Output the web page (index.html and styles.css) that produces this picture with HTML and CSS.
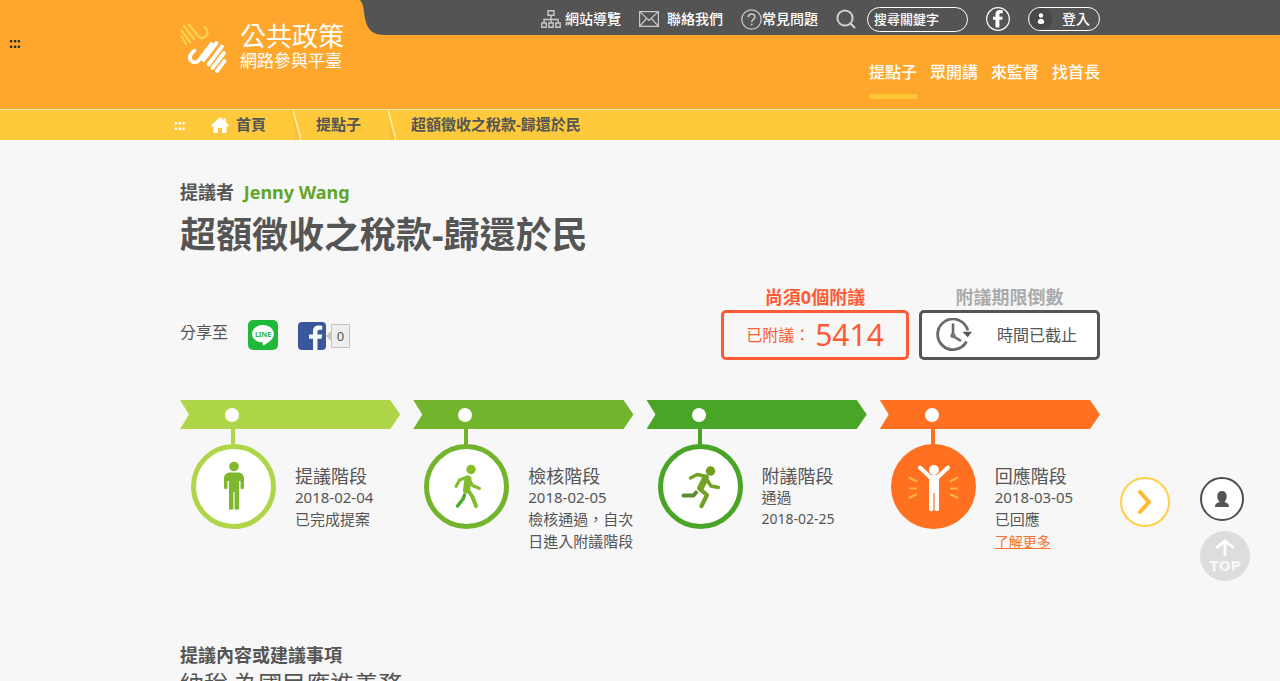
FILE: index.html
```html
<!DOCTYPE html>
<html lang="zh-Hant">
<head>
<meta charset="utf-8">
<meta name="viewport" content="width=device-width, initial-scale=1">
<title>超額徵收之稅款-歸還於民</title>
<link rel="stylesheet" href="styles.css">
</head>
<body>
<header class="header">
  <a class="access-key" href="#top" title="上方導覽區">:::</a>
  <a class="logo" href="#">
    <svg class="logo-mark" viewBox="0 0 48 52" width="48" height="52" fill="none" stroke-linecap="round" aria-hidden="true">
      <g stroke="#fdd04c" stroke-width="2.400">
        <path d="M1.500 14.500l4.500 7.500M1.500 8.500L10 20M4 4l10 13M9 2.500l9 11.500c2 2.500 5 2.500 7.500.500s2.500-4.500 1-7l-2-2.500"/>
      </g>
      <g stroke="#fff" stroke-width="3.800">
        <path d="M31.500 22L20 37c-2.500 3.500-6 4.500-8.500 2s-1.800-5.500.5-8l2.500-2.500M36.500 21L23.500 38M42 24.500L28.500 42.500M44 31L32.500 46M44.500 39L37 49"/>
      </g>
    </svg>
    <span class="logo-text"><span class="logo-main">公共政策</span><span class="logo-sub">網路參與平臺</span></span>
  </a>
  <div class="topbar">
    <svg class="topbar-corner" viewBox="0 0 28 35" width="28" height="35" aria-hidden="true"><path d="M0 0C5 5 3 16 7 25c3 7 9 10 17 10h4V0z" fill="#545454"/></svg>
    <div class="topbar-items">
      <a class="top-link" href="#"><svg viewBox="0 0 20 20" width="20" height="20" fill="none" stroke="#c8c8c8" stroke-width="1.400" aria-hidden="true"><path d="M7 1.700h6v4.600H7zM.8 14h4.400v4.200H.8zM7.800 14h4.400v4.200H7.800zM14.800 14h4.400v4.200h-4.400zM10 6.500V14M3 14v-3.500h14V14"/></svg>網站導覽</a>
      <a class="top-link mail" href="#"><svg viewBox="0 0 20 16" width="20" height="16" fill="none" stroke="#c8c8c8" stroke-width="1.200" aria-hidden="true"><path d="M.6.600h18.800v14.800H.6zM.6.600L10 9.500 19.400.600M.6 15.400L7.500 7.500M19.400 15.400L12.500 7.500"/></svg>聯絡我們</a>
      <a class="top-link faq" href="#"><svg viewBox="0 0 21 21" width="21" height="21" fill="none" stroke="#c8c8c8" stroke-width="1.300" aria-hidden="true"><circle cx="10.500" cy="10.500" r="9.700"/><path d="M7.300 8.300c0-4.300 6.600-4.300 6.600-.4 0 2.500-3.200 2.400-3.200 5.200" stroke-width="1.600"/><path d="M10.700 14.600v1.700" stroke-width="1.800"/></svg>常見問題</a>
      <form class="search">
        <button class="search-button" type="button" aria-label="搜尋"><svg viewBox="0 0 20 20" width="20" height="20" fill="none" stroke="#d0d0d0" stroke-width="2" stroke-linecap="round" aria-hidden="true"><circle cx="9" cy="9" r="7.600"/><path d="M14.500 14.500l4 4"/></svg></button>
        <input class="search-input" type="text" placeholder="搜尋關鍵字" aria-label="搜尋關鍵字">
      </form>
      <a class="facebook" href="#" aria-label="Facebook"><svg viewBox="0 0 24 24" width="24" height="24" aria-hidden="true"><circle cx="12" cy="12" r="11.300" fill="none" stroke="#fff" stroke-width="1.200"/><path d="M9.500 20.500v-7.700H7V9.700h2.500V7.600c0-3.400 2-4.700 4.600-4.700l2.600.1v3.300h-1.600c-1.400 0-1.700.6-1.700 1.500v1.900h3.200l-.4 3.100h-2.800v7.700z" fill="#fff"/></svg></a>
      <a class="login" href="#"><svg viewBox="0 0 22 22" width="22" height="22" aria-hidden="true"><circle cx="11" cy="11" r="11" fill="#484848"/><circle cx="11" cy="7.500" r="2.200" fill="#fff"/><path d="M7.800 14c0-4.300 6.400-4.300 6.400 0 0 2.700-6.400 2.700-6.400 0z" fill="#fff"/></svg>登入</a>
    </div>
  </div>
  <nav class="main-nav">
    <a class="nav-link current" href="#">提點子</a>
    <a class="nav-link" href="#">眾開講</a>
    <a class="nav-link" href="#">來監督</a>
    <a class="nav-link" href="#">找首長</a>
  </nav>
</header>

<nav class="breadcrumb" aria-label="路徑">
  <div class="breadcrumb-inner">
    <a class="breadcrumb-key" href="#main" title="主要內容區">:::</a>
    <a class="crumb" href="#"><svg viewBox="0 0 18 16" width="18" height="16" fill="#fff" aria-hidden="true"><path d="M9 0l3.500 3.200V1.500H15v4l3 3L17 9.700l-1.500-.8V16H11v-5H7v5H2.500V8.900L1 9.700 0 8.500z"/></svg><span class="crumb-text">首頁</span></a>
    <svg class="divider" viewBox="0 0 8 30" width="8" height="30" aria-hidden="true"><path d="M0 0l8 30H2z" fill="#fabf39"/><path d="M0 0l8 30" stroke="#ffec9c" stroke-width="1.800"/></svg>
    <a class="crumb" href="#"><span class="crumb-text">提點子</span></a>
    <svg class="divider" viewBox="0 0 8 30" width="8" height="30" aria-hidden="true"><path d="M0 0l8 30H2z" fill="#fabf39"/><path d="M0 0l8 30" stroke="#ffec9c" stroke-width="1.800"/></svg>
    <span class="crumb-text">超額徵收之稅款-歸還於民</span>
  </div>
</nav>

<main class="page" id="main">
  <p class="proposer">提議者 <a class="proposer-name" href="#">Jenny Wang</a></p>
  <h1 class="title">超額徵收之稅款-歸還於民</h1>

  <div class="summary">
    <div class="share">
      <span class="share-label">分享至</span>
      <a class="share-line" href="#" aria-label="LINE">
        <svg viewBox="0 0 30 30" width="30" height="30"><rect width="30" height="30" rx="5" fill="#1fb83a"/><path d="M15 5c6 0 10.900 3.900 10.900 8.900 0 4.300-4.500 8.300-10.400 11.300-.8.400-1-.1-.8-1l.2-1.600C8.500 22.400 4.100 18.600 4.100 13.900 4.100 8.900 9 5 15 5z" fill="#fff"/><text x="15" y="16.500" class="line-word">LINE</text></svg>
      </a>
      <a class="share-facebook" href="#" aria-label="Facebook">
        <svg viewBox="0 0 28 28" width="28" height="28" aria-hidden="true"><rect width="28" height="28" rx="4" fill="#39579a"/><path d="M15 28V16.800h-4V12.500h4V9.300c0-4 2.400-5.700 5.800-5.700l3.500.2v4h-2.400c-1.900 0-2.400.9-2.400 2.300v2.400h4.600l-.6 4.300h-4V28z" fill="#f7f7f7"/></svg>
        <svg viewBox="0 0 5 10" width="5" height="10" aria-hidden="true"><path d="M0 5l5-5v10z" fill="#c4c4c4"/></svg>
        <span class="count">0</span>
      </a>
    </div>
    <section class="stat endorse">
      <h2 class="stat-title">尚須0個附議</h2>
      <p class="stat-box">已附議： <strong class="stat-number">5414</strong></p>
    </section>
    <section class="stat deadline">
      <h2 class="stat-title">附議期限倒數</h2>
      <p class="stat-box"><svg viewBox="0 0 36 34" width="36" height="34" fill="none" stroke="#6a6a6a" aria-hidden="true"><path d="M31.800 12.500A15.300 15.300 0 1 0 30.500 23.500" stroke-width="2.800"/><path d="M26.500 13.800h9.500l-4.300 5.400z" fill="#555" stroke="none"/><path d="M17 5.500V18l8 5" stroke-width="2.600"/><circle cx="17" cy="17.500" r="2.600" fill="#777" stroke="none"/></svg>時間已截止</p>
    </section>
  </div>

  <div class="timeline">
    <ol class="steps">
      <li class="step step-propose">
        <div class="ribbon"><span class="dot"></span></div>
        <div class="step-body">
          <svg class="badge" viewBox="0 0 85 100" width="85" height="100" aria-hidden="true">
            <path d="M42 0v18" stroke="currentColor" stroke-width="4"/><circle cx="42.500" cy="57.500" r="40" fill="#fff" stroke="currentColor" stroke-width="5"/>
            <g fill="#7fb82c"><circle cx="43" cy="37.500" r="4.800"/><path d="M39 43.500h8c3.500 0 6 2.500 6 6V59c0 1.500-3.300 1.500-3.500 0v-7H48v28.500h-4.400V63h-1.200v17.500H38V52h-1.500v7c-.2 1.500-3.500 1.500-3.500 0v-9.500c0-3.500 2.500-6 6-6z"/></g>
          </svg>
          <div class="step-text"><h3 class="step-title">提議階段</h3><p>2018-02-04</p><p>已完成提案</p></div>
        </div>
      </li>
      <li class="step step-review">
        <div class="ribbon"><span class="dot"></span></div>
        <div class="step-body">
          <svg class="badge" viewBox="0 0 85 100" width="85" height="100" aria-hidden="true">
            <path d="M42 0v18" stroke="currentColor" stroke-width="4"/><circle cx="42.500" cy="57.500" r="40" fill="#fff" stroke="currentColor" stroke-width="5"/>
            <circle cx="47" cy="40.500" r="4.700" fill="#85bd26"/>
            <g fill="none" stroke="#82bb2b" stroke-linecap="round" stroke-linejoin="round"><path d="M32 57.500l3.500-6.500 8-3M45 50l3.500 6.500 7 3" stroke-width="3"/><path d="M44 50l-1.500 11" stroke-width="7"/><path d="M44 61l4.500 7 3.500 9" stroke-width="4"/><path d="M40.500 66l-1.500 4-5.500 7" stroke="#4daa30" stroke-width="3.500"/></g>
          </svg>
          <div class="step-text"><h3 class="step-title">檢核階段</h3><p>2018-02-05</p><p>檢核通過，自次日進入附議階段</p></div>
        </div>
      </li>
      <li class="step step-endorse">
        <div class="ribbon"><span class="dot"></span></div>
        <div class="step-body">
          <svg class="badge" viewBox="0 0 85 100" width="85" height="100" aria-hidden="true">
            <path d="M42 0v18" stroke="currentColor" stroke-width="4"/><circle cx="42.500" cy="57.500" r="40" fill="#fff" stroke="currentColor" stroke-width="5"/>
            <circle cx="52.500" cy="42" r="4.700" fill="#6f9d20"/>
            <g fill="none" stroke="#71a226" stroke-linecap="round" stroke-linejoin="round"><path d="M32.500 49l6.500-3.500 10 2M49 51l4 6 7.500 1.500" stroke-width="3.400"/><path d="M47.500 49l-5 10" stroke-width="6.500"/><path d="M42 60l7 6-5.500 11" stroke-width="4.200"/><path d="M38 63.500l-2.500 3H25.500" stroke="#5c8e2b" stroke-width="4"/></g>
          </svg>
          <div class="step-text"><h3 class="step-title">附議階段</h3><p>通過</p><p class="small">2018-02-25</p></div>
        </div>
      </li>
      <li class="step step-respond">
        <div class="ribbon"><span class="dot"></span></div>
        <div class="step-body">
          <svg class="badge" viewBox="0 0 85 100" width="85" height="100" aria-hidden="true">
            <path d="M42 0v18" stroke="currentColor" stroke-width="4"/><circle cx="42.500" cy="57.500" r="42.500" fill="currentColor"/>
            <circle cx="43" cy="41" r="5" fill="#fff"/>
            <path d="M29 38.500L40 49M57 38.500L46 49" stroke="#fff" stroke-width="4" stroke-linecap="round"/><path d="M38 46h10v35c0 1.500-4.200 1.500-4.400 0V64h-1.200v17c-.2 1.500-4.400 1.500-4.400 0z" fill="#fff"/>
            <path d="M18 48.500l8 4M18 59.500h8M18 69l8-4M67 48.500l-8 4M67 59.500h-8M67 69l-8-4" stroke="#ffb43d" stroke-width="2"/>
          </svg>
          <div class="step-text"><h3 class="step-title">回應階段</h3><p>2018-03-05</p><p>已回應</p><p><a class="more" href="#">了解更多</a></p></div>
        </div>
      </li>
    </ol>
    <button class="next" type="button" aria-label="下一個"><svg viewBox="0 0 50 50" width="50" height="50" aria-hidden="true"><circle cx="25" cy="25" r="24" fill="#fff" stroke="#ffd04a" stroke-width="2"/><path d="M20 15l9 10-9 10" fill="none" stroke="#ffb932" stroke-width="4" stroke-linecap="round" stroke-linejoin="round"/></svg></button>
  </div>

  <section class="content">
    <h2 class="content-title">提議內容或建議事項</h2>
    <p class="content-text">納稅 為國民應進義務</p>
  </section>
</main>

<div class="floating">
  <button class="float-button" type="button" aria-label="會員"><svg viewBox="0 0 44 44" width="44" height="44" aria-hidden="true"><circle cx="22" cy="22" r="21" fill="#fff" stroke="#4d4d4d" stroke-width="2"/><path d="M22 14c3 0 4.700 2 4.700 5s-1 4.600-2.200 5.700c1.300 1.200 4.500 1.100 4.500 5.300H15c0-4.200 3.200-4.100 4.500-5.300-1.200-1.100-2.200-2.700-2.200-5.700s1.700-5 4.700-5z" fill="#555"/></svg></button>
  <a class="to-top" href="#"><svg viewBox="0 0 20 18" width="20" height="18" fill="none" stroke="#fff" stroke-width="2.800" aria-hidden="true"><path d="M10 17V2M1 9l9-7 9 7"/></svg>TOP</a>
</div>
</body>
</html>
```
FILE: styles.css
```css
* {
  box-sizing: border-box;
}

body {
  margin: 0;
  background: #f7f7f7;
  color: #555;
  font-family: "Noto Sans", "Noto Sans CJK TC", sans-serif;
  font-size: 15px;
  line-height: 22px;
}

h1, h2, h3, p, ol {
  margin: 0;
  padding: 0;
}

a {
  color: inherit;
  text-decoration: none;
}

svg {
  display: block;
  flex: none;
}

button {
  padding: 0;
  border: 0;
  background: none;
  cursor: pointer;
}

/* Header */
.header {
  display: grid;
  grid-template-columns: 1fr 180px minmax(0, 740px) 1fr;
  grid-template-rows: 35px 74px;
  background: #ffa72d;
  color: #fff;
}

.header::after {
  content: "";
  grid-area: 1 / 4;
  background: #545454;
}

.access-key {
  grid-area: 1 / 1 / 3 / 2;
  padding: 32px 0 0 9px;
  color: #222;
  font-size: 14px;
  font-weight: 700;
  justify-self: start;
}

.logo {
  grid-area: 1 / 2 / 3 / 3;
  display: flex;
  align-items: flex-start;
  gap: 12px;
  padding-top: 22px;
}

.logo-text {
  display: flex;
  flex-direction: column;
  white-space: nowrap;
}

.logo-main {
  font-size: 26px;
  line-height: 28px;
}

.logo-sub {
  font-size: 17px;
  line-height: 22px;
}

.topbar {
  grid-area: 1 / 3;
  display: flex;
}

.topbar-items {
  display: flex;
  flex: 1;
  align-items: center;
  justify-content: flex-end;
  gap: 18px;
  padding-top: 3px;
  background: #545454;
  font-size: 14px;
  font-weight: 500;
}

.top-link {
  display: flex;
  align-items: center;
  gap: 4px;
  white-space: nowrap;
}

.mail {
  gap: 8px;
}

.faq {
  gap: 0;
}

.search {
  display: flex;
  align-items: center;
  gap: 11px;
}

.search-input {
  width: 101px;
  height: 25px;
  padding: 0 6px;
  border: 1px solid #fff;
  border-radius: 13px;
  background: transparent;
  color: #fff;
  font: 500 13px/22px "Noto Sans", "Noto Sans CJK TC", sans-serif;
}

.search-input::placeholder {
  color: #fff;
  opacity: 1;
}

.login {
  display: flex;
  align-items: center;
  justify-content: space-between;
  width: 72px;
  height: 24px;
  padding: 0 9px 0 1px;
  border: 1px solid #fff;
  border-radius: 12px;
}

.main-nav {
  grid-area: 2 / 3;
  display: flex;
  justify-content: flex-end;
  align-items: flex-start;
  gap: 13px;
  padding-top: 26px;
  font-size: 16px;
  font-weight: 500;
}

.nav-link {
  padding-bottom: 11px;
  border-bottom: 5px solid transparent;
}

.current {
  border-color: #ffc733;
}

/* Breadcrumb */
.breadcrumb {
  border-top: 1px solid #ffe5a8;
  background: #ffc93c;
}

.breadcrumb-inner {
  display: flex;
  align-items: center;
  max-width: 932px;
  margin: 0 auto;
  font-weight: 700;
}

.breadcrumb-key {
  width: 37px;
  color: #fff;
  font-size: 14px;
}

.crumb {
  display: flex;
  align-items: center;
  gap: 7px;
}

.crumb-text {
  padding-bottom: 2px;
}

.divider {
  margin: 0 15px 0 27px;
}

/* Proposal heading */
.page {
  max-width: 920px;
  margin: 0 auto;
  padding: 40px 0 60px;
}

.proposer {
  font-size: 18px;
  font-weight: 700;
  line-height: 24px;
}

.proposer-name {
  margin-left: 5px;
  color: #61a527;
}

.title {
  font-size: 36px;
  line-height: 62px;
}

/* Share links and endorsement status */
.summary {
  display: flex;
  gap: 10px;
  margin-top: 20px;
}

.share {
  display: flex;
  flex: 1;
  align-items: flex-start;
  gap: 20px;
  padding-top: 34px;
}

.share-label {
  font-size: 16px;
  line-height: 24px;
}

.share-facebook {
  display: flex;
  align-items: center;
  padding-top: 2px;
}

.line-word {
  fill: #1fb83a;
  font: 700 7px "Noto Sans", sans-serif;
  text-anchor: middle;
}

.count {
  width: 19px;
  border: 1px solid #c4c4c4;
  background: #eee;
  font-size: 13px;
  text-align: center;
}

.stat {
  text-align: center;
}

.stat-title {
  padding-bottom: 2px;
  font-size: 18px;
  line-height: 22px;
}

.stat-box {
  display: flex;
  align-items: center;
  justify-content: center;
  height: 50px;
  border: 3px solid;
  border-radius: 5px;
  font-size: 16px;
}

.endorse {
  width: 188px;
  color: #fd5c36;
}

.stat-number {
  margin-left: 5px;
  font-size: 30px;
  font-weight: 400;
}

.deadline {
  width: 181px;
}

.deadline .stat-title {
  color: #aaa;
}

.deadline .stat-box {
  justify-content: space-between;
  padding: 0 20px 0 14px;
  background: #fff;
}

/* Stage timeline */
.timeline {
  position: relative;
  margin-top: 40px;
}

.steps {
  display: grid;
  grid-template-columns: repeat(4, 1fr);
  gap: 13px;
  list-style: none;
}

.ribbon {
  display: flex;
  align-items: center;
  height: 29px;
  padding-left: 45px;
  background: currentColor;
  clip-path: polygon(0 0, calc(100% - 10px) 0, 100% 50%, calc(100% - 10px) 100%, 0 100%, 9px 50%);
}

.dot {
  width: 14px;
  height: 14px;
  border-radius: 50%;
  background: #fff;
}

.step-body {
  display: flex;
  gap: 19px;
  padding-left: 11px;
}

.step-text {
  padding-top: 37px;
  color: #555;
}

.step-title {
  font-size: 18px;
  font-weight: 400;
  line-height: 20px;
}

.small {
  font-size: 14px;
}

.more {
  color: #f87430;
  font-size: 14px;
  text-decoration: underline;
}

.step-propose {
  color: #afd648;
}

.step-review {
  color: #73b42d;
}

.step-endorse {
  color: #48a526;
}

.step-respond {
  color: #ff7121;
}

.next {
  position: absolute;
  top: 77px;
  left: calc(100% + 20px);
}

/* Proposal content */
.content {
  margin-top: 90px;
}

.content-title {
  font-size: 18px;
  line-height: 24px;
}

.content-text {
  font-size: 24px;
  line-height: 34px;
}

/* Floating shortcuts */
.floating {
  position: fixed;
  right: 30px;
  bottom: 100px;
  display: flex;
  flex-direction: column;
  align-items: flex-start;
  gap: 10px;
}

.to-top {
  display: flex;
  flex-direction: column;
  align-items: center;
  width: 50px;
  height: 50px;
  padding-top: 8px;
  border-radius: 50%;
  background: #ddd;
  color: #f7f7f7;
  font: 700 14px/18px "DejaVu Sans", sans-serif;
}
```
